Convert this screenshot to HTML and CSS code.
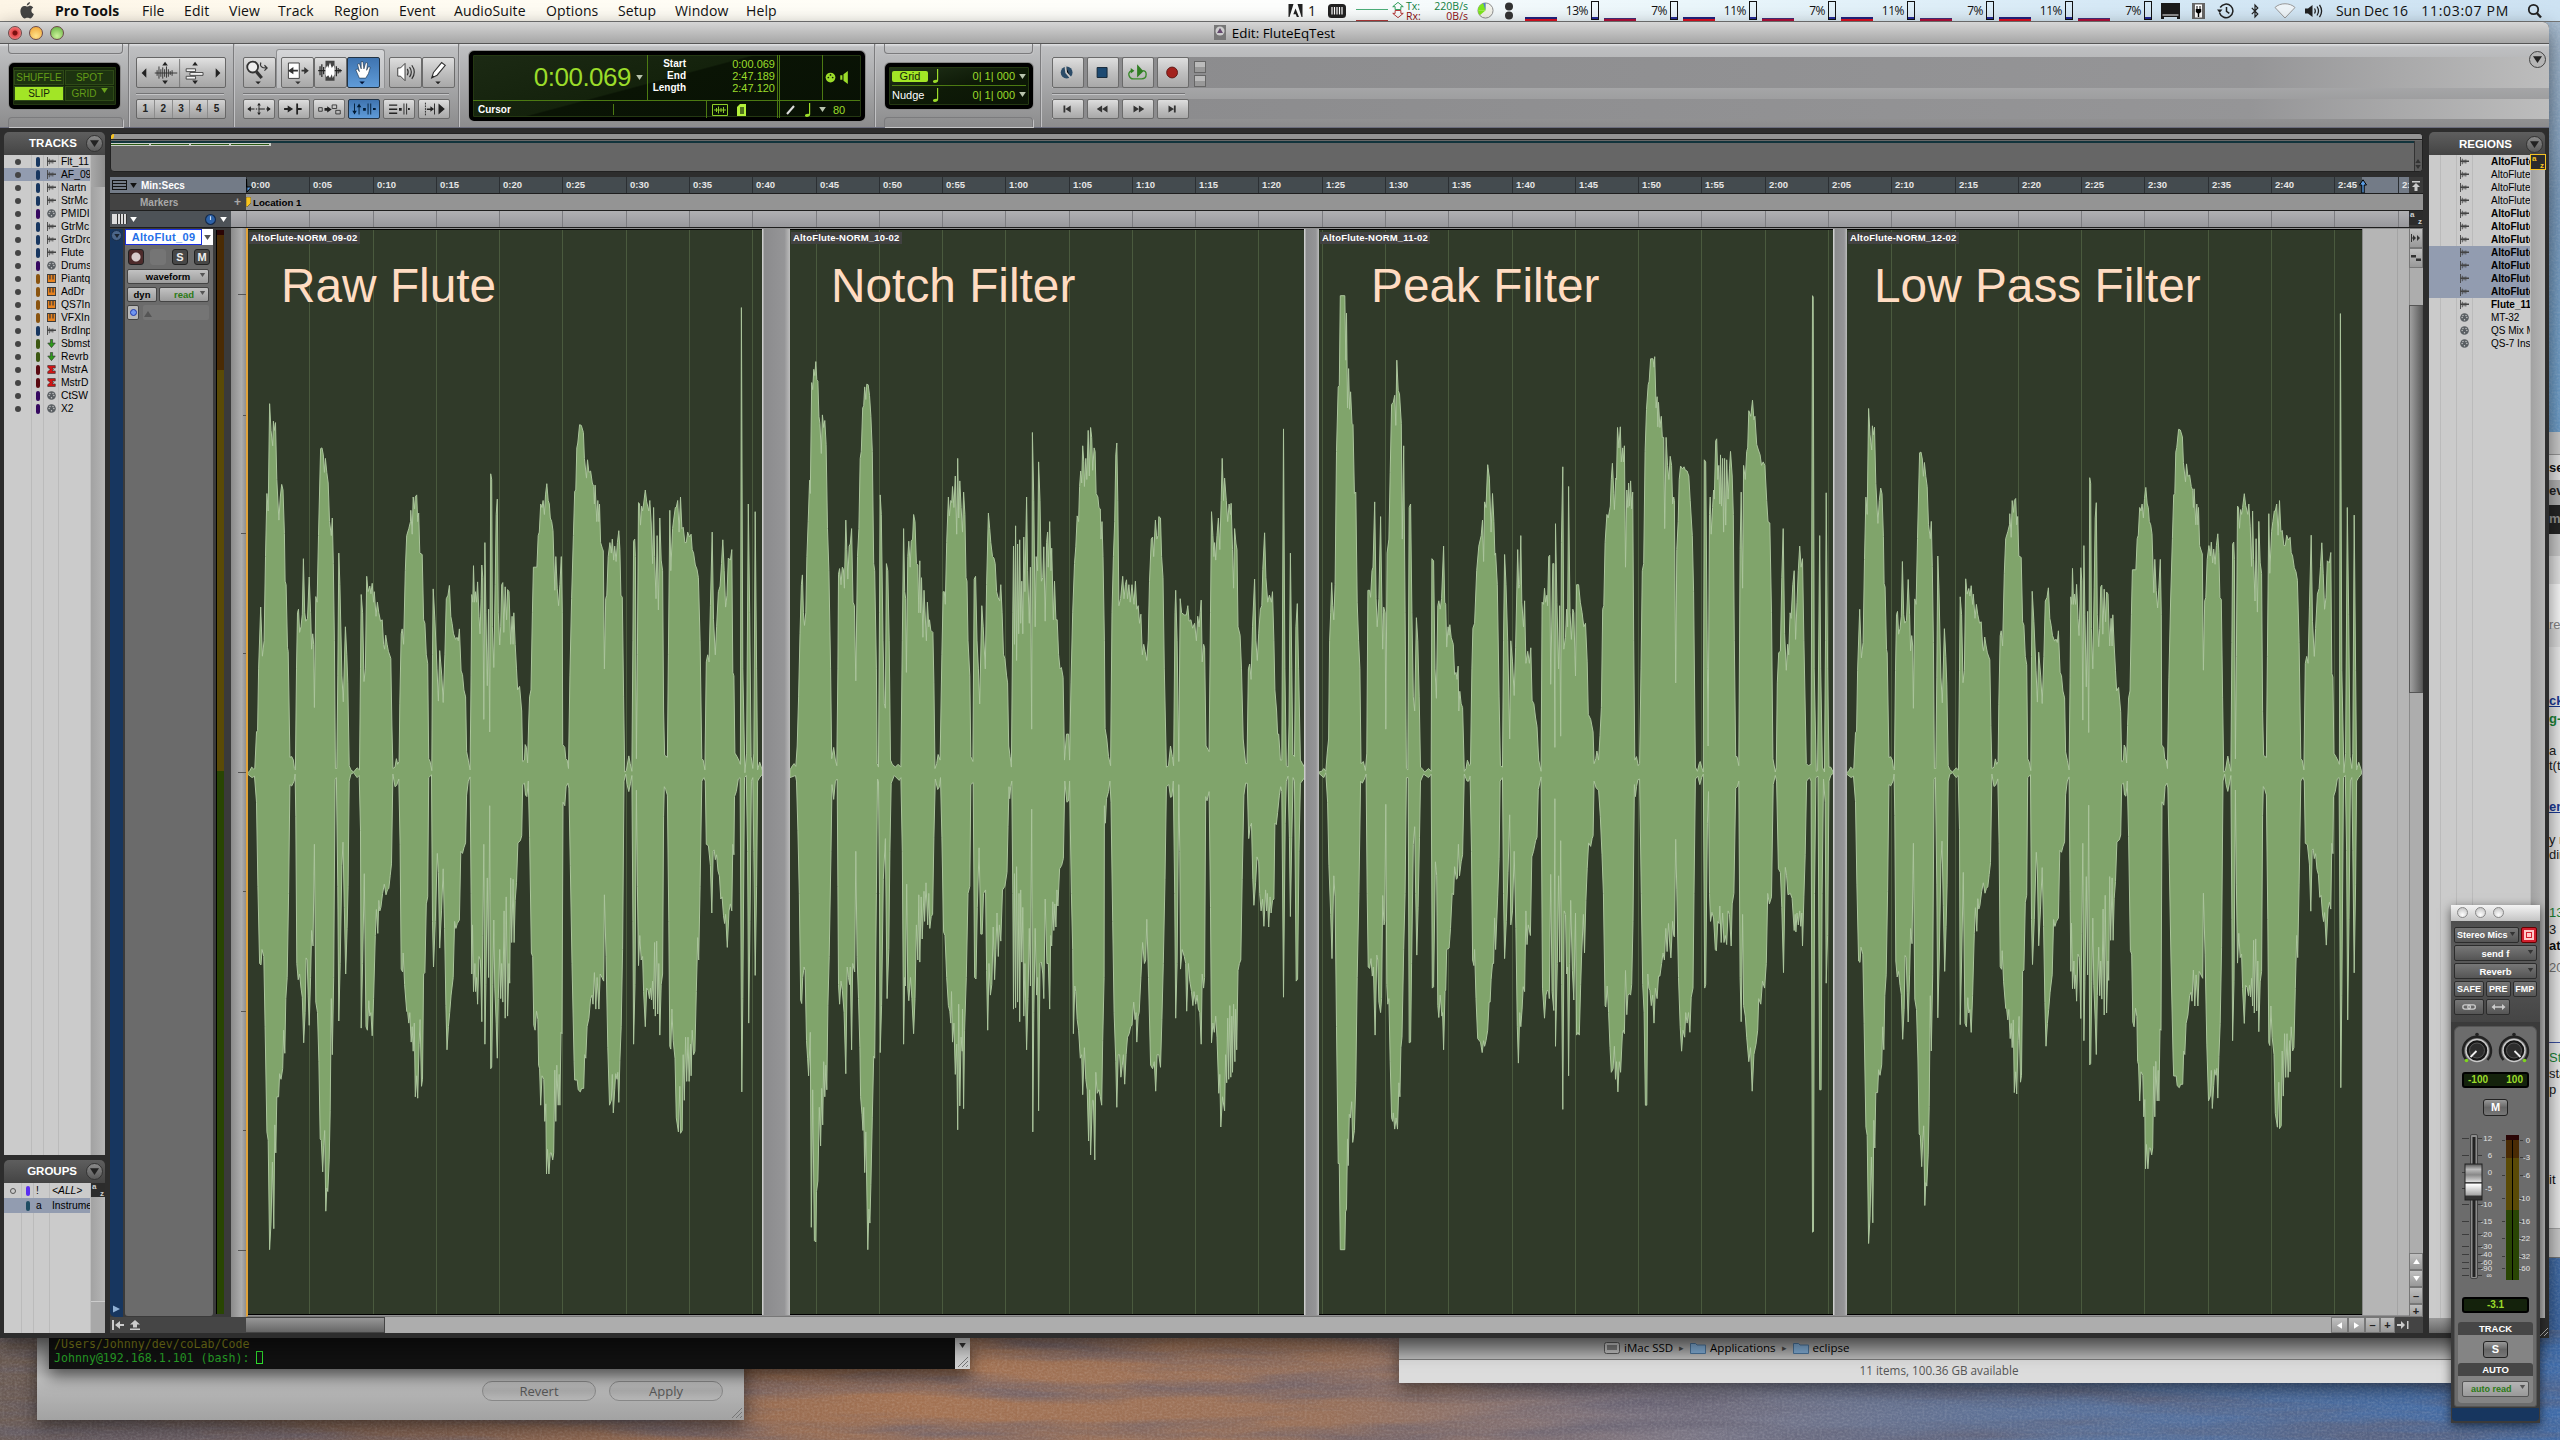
FILE: index.html
```html
<!DOCTYPE html>
<html lang="en">
<head>
<meta charset="utf-8">
<title>Edit: FluteEqTest</title>
<link rel="stylesheet" href="styles.css">
</head>
<body>
<svg class="defs" width="0" height="0" aria-hidden="true">
  <symbol id="i-wave" viewBox="0 0 10 10"><path d="M0 0h1v10H0zM2 2h1v6H2zM4 3h1v4H4zM1 4h9v1.6H1zM6 2.8h1v4.4H6z"/></symbol>
  <symbol id="i-midi" viewBox="0 0 10 10"><circle cx="5" cy="5" r="4.8" fill="#5a5f63"/><g fill="#c9c9c9"><circle cx="2.4" cy="5" r=".8"/><circle cx="3.3" cy="2.8" r=".8"/><circle cx="6.7" cy="2.8" r=".8"/><circle cx="7.6" cy="5" r=".8"/><circle cx="5" cy="7.4" r=".8"/></g></symbol>
  <symbol id="i-inst" viewBox="0 0 10 10"><path fill="#3a3a3a" d="M0 0h10v10H0z"/><path fill="#e8821e" d="M1 1h1.6v5H4V1h2v5h1.4V1H9v8H1z"/></symbol>
  <symbol id="i-aux" viewBox="0 0 10 10"><path fill="#2f9a1c" stroke="#333" stroke-width=".7" d="M3.8.5h2.4v4h3L5 9.6.8 4.500h3z"/></symbol>
  <symbol id="i-mstr" viewBox="0 0 10 10"><path fill="#d41414" stroke="#333" stroke-width=".7" d="M.8.6h8.400v2.800H5.600L7.200 5 5.600 6.600h3.600v2.800H.8V7.600L3.400 5 .8 2.400z"/></symbol>
  <symbol id="i-down" viewBox="0 0 8 6"><path d="M0 0h8L4 6z"/></symbol>
  <symbol id="i-up" viewBox="0 0 8 6"><path d="M0 6h8L4 0z"/></symbol>
  <symbol id="i-left" viewBox="0 0 6 8"><path d="M6 0v8L0 4z"/></symbol>
  <symbol id="i-right" viewBox="0 0 6 8"><path d="M0 0v8l6-4z"/></symbol>
  <symbol id="i-note" viewBox="0 0 8 14"><path d="M5 0h1.200v11.200C6.200 13 4.500 14 2.800 14 1.500 14 1 13.300 1 12.600 1 11.400 2.600 10.600 5 10.900z"/></symbol>
</svg>

<div class="desktop">
  <svg class="wallpaper" width="2560" height="1440">
    <filter id="grain" x="0" y="0" width="100%" height="100%">
      <feTurbulence type="fractalNoise" baseFrequency="0.004 0.045" numOctaves="5" seed="7"/>
      <feColorMatrix values="0 0 0 0 0.12  0 0 0 0 0.11  0 0 0 0 0.16  2.600 0 0 0 -1"/>
    </filter>
    <filter id="grain2" x="0" y="0" width="100%" height="100%">
      <feTurbulence type="fractalNoise" baseFrequency="0.4 0.5" numOctaves="2" seed="3"/>
      <feColorMatrix values="0 0 0 0 1  0 0 0 0 1  0 0 0 0 1  0 1.400 0 0 -.5"/>
    </filter>
    <linearGradient id="wp"><stop offset="0" stop-color="#6c5b50"/><stop offset=".16" stop-color="#7f5f4f"/><stop offset=".36" stop-color="#a37252"/><stop offset=".52" stop-color="#987059"/><stop offset=".64" stop-color="#7e7580"/><stop offset=".78" stop-color="#5d7196"/><stop offset="1" stop-color="#3f6ba8"/></linearGradient>
    <linearGradient id="wpr" x2="0" y2="1"><stop offset="0" stop-color="#a9bccf"/><stop offset=".15" stop-color="#7b9dc0"/><stop offset=".3" stop-color="#6fa0cc"/><stop offset=".8" stop-color="#4676ae"/><stop offset="1" stop-color="#3c66a3"/></linearGradient>
    <rect width="2560" height="1440" fill="url(#wp)"/>
    <rect x="2540" width="20" height="1330" fill="url(#wpr)"/>
    <rect y="1330" width="2560" height="110" filter="url(#grain)" opacity=".6"/>
    <rect y="1330" width="2560" height="110" filter="url(#grain2)" opacity=".2"/>
    <rect x="2540" width="20" height="1330" filter="url(#grain2)" opacity=".2"/>
  </svg>

  <section class="win browser">
    <div class="browser-text" id="browserText"></div>
  </section>

  <section class="win prefs">
    <button class="pill">Revert</button>
    <button class="pill">Apply</button>
    <svg class="grip" viewBox="0 0 12 12"><path d="M11 1 1 11M11 5 5 11M11 9l-2 2"/></svg>
  </section>

  <section class="win terminal">
    <div class="term-text"><p class="term-path">/Users/Johnny/dev/coLab/Code</p><p>Johnny@192.168.1.101 (bash): <i class="caret"></i></p></div>
    <div class="term-bar"><svg><use href="#i-down"/></svg><svg class="tgrip" viewBox="0 0 12 12"><path d="M11 1 1 11M11 5 5 11M11 9l-2 2"/></svg></div>
  </section>

  <section class="win finder">
    <div class="path-bar">
      <span class="crumb"><svg viewBox="0 0 16 12"><rect x=".5" y=".5" width="15" height="11" rx="2" fill="#bbb" stroke="#555"/><path d="M3 3h10v5H3z" fill="#777"/></svg>iMac SSD</span>
      <b>▸</b>
      <span class="crumb"><svg viewBox="0 0 16 12"><path d="M.5 1.500h5l1.500 1.500h8.500v8.500H.5z" fill="#7fa9d0" stroke="#4a7298"/></svg>Applications</span>
      <b>▸</b>
      <span class="crumb"><svg viewBox="0 0 16 12"><path d="M.5 1.500h5l1.500 1.500h8.500v8.500H.5z" fill="#7fa9d0" stroke="#4a7298"/></svg>eclipse</span>
    </div>
    <div class="status">11 items, 100.36 GB available</div>
  </section>

  <header class="menubar">
    <svg class="apple" viewBox="0 0 16 18"><path fill="#444" d="M11.200 0c.1 1.900-1.500 3.600-3.400 3.600C7.600 1.900 9.300.2 11.200 0zM8.200 4.800c.9 0 1.800-.8 3.100-.8 1 0 2.400.5 3.300 1.800-2.900 1.700-2.400 5.800.7 6.900-.8 2.200-2.300 4.800-3.900 4.800-1.100 0-1.500-.7-2.900-.7s-1.800.7-2.900.7C3.400 17.500 1 13.300 1 9.600 1 6.100 3.200 4.200 5.300 4.200c1.300 0 2.200.6 2.900.6z"/></svg>
    <nav class="menus">
      <b>Pro Tools</b><span>File</span><span>Edit</span><span>View</span><span>Track</span><span>Region</span><span>Event</span><span>AudioSuite</span><span>Options</span><span>Setup</span><span>Window</span><span>Help</span>
    </nav>
    <div class="adobe"><svg viewBox="0 0 14 13"><path fill="#222" d="M0 0h5L1 13H0zM9 0h5v13h-1zM7 4.500 10.500 13H8.300L7.300 10.300H4.800z"/></svg>1</div>
    <svg class="mem" viewBox="0 0 18 14"><rect width="18" height="14" rx="3.500" fill="#222"/><path stroke="#fff" stroke-width="1.200" d="M4 3v7.500M6.500 3v7.500M9 3v7.500M11.500 3v7.500M14 3v7.500"/></svg>
    <svg class="netgraph" viewBox="0 0 32 22"><path stroke="#4caf7a" d="M0 9.500h32"/><path stroke="#b33a3a" d="M0 20.500h32"/></svg>
    <svg class="netarrows" viewBox="0 0 14 22"><path fill="none" stroke="#2a9a55" d="M7 2.500 12.500 7H10v3H4V7H1.500z"/><path fill="none" stroke="#b03030" d="M7 18.500 12.500 14H10v-3H4v3H1.500z"/></svg>
    <div class="net"><p class="sent"><span>Tx:</span><span>220B/s</span></p><p class="recv"><span>Rx:</span><span>0B/s</span></p></div>
    <svg class="pie" viewBox="0 0 18 18"><circle cx="9" cy="9" r="8" fill="#f2f2ea" stroke="#888"/><path fill="#7ee81c" d="M9 9 9 1A8 8 0 0 0 1 9z"/><path fill="#7ee81c" d="M9 9H1a8 8 0 0 0 2 5z"/><path fill="#5b7bd8" d="M9 9V1H6.500z"/></svg>
    <svg class="dots" viewBox="0 0 8 18"><circle cx="4" cy="4.500" r="4" fill="#333"/><circle cx="4" cy="13.500" r="4" fill="#333"/></svg>
    <div class="cpus" id="cpus"></div>
    <svg class="mi display" viewBox="0 0 19 16"><path fill="#1a1a1a" d="M0 0h19v16h-3v-2H3v2H0z"/><path fill="#fff" d="M1.500 11.500h16v1h-16z"/></svg>
    <svg class="mi plug" viewBox="0 0 13 16"><rect width="13" height="16" fill="#666"/><rect x="3" y="1.500" width="7" height="13" fill="#fff"/><path d="M4.500 3v3h-.7v3l2 1.500V14h1.400v-3.500l2-1.500V6h-.7V3h-1v3h-2V3z"/></svg>
    <svg class="mi machine" viewBox="0 0 17 16"><path fill="none" stroke="#222" stroke-width="1.500" d="M3.200 4.500A6.800 6.800 0 1 1 2.600 10M9.500 4v4.300l2.800 2"/><path fill="#222" d="M0 6.500h5.500L2.600 10z"/></svg>
    <svg class="mi tooth" viewBox="0 0 8 14"><path fill="none" stroke="#222" stroke-width="1.200" d="M.8 3.800 6.800 10 4 13V1l2.800 3L.8 10.200"/></svg>
    <svg class="mi wifi" viewBox="0 0 22 16"><path fill="#eef4f8" stroke="#999" d="M11 15 1 4.500C6-.5 16-.5 21 4.500z"/></svg>
    <svg class="mi sound" viewBox="0 0 18 14"><path fill="#222" d="M0 4.500h3L7.500 1v12L3 9.500H0z"/><path fill="none" stroke="#222" stroke-width="1.300" d="M9.500 4.500q1.600 2.500 0 5M12 2.500q3 4.500 0 9M14.500.8q4.200 6.200 0 12.400"/></svg>
    <div class="clock"><span>Sun Dec 16</span><span class="time">11:03:07 PM</span></div>
    <svg class="mi find" viewBox="0 0 15 15"><circle cx="6.500" cy="6" r="4.700" fill="none" stroke="#222" stroke-width="1.800"/><path stroke="#222" stroke-width="2.400" d="M9.800 9.500 14 14"/></svg>
  </header>

  <main class="edit">
    <div class="titlebar">
      <div class="lights"><i class="red"></i><i class="amber"></i><i class="green"></i></div>
      <h1><svg viewBox="0 0 12 15"><path fill="#777" d="M0 0h12v15H0z"/><circle cx="6" cy="6" r="4.500" fill="#ccc"/><path fill="#654a6e" d="M6 3 9 8H3z"/></svg>Edit: FluteEqTest</h1>
    </div>

    <div class="toolbar">
      <div class="tg mode">
        <div class="stub top"></div>
        <div class="lcd modes"><span>SHUFFLE</span><span>SPOT</span><span class="on">SLIP</span><span>GRID<svg><use href="#i-down"/></svg></span></div>
        <div class="stub bot"></div>
      </div>
      <div class="tg zoom">
        <div class="btnbox">
          <svg viewBox="0 0 90 32">
            <path d="M43.500 1v30" stroke="#777"/>
            <path fill="#222" d="M8 11v10l-5-5zM82 11v10l5-5zM28 4l3 4h-6zM28 28l3-4h-6zM60 4l3 4h-6zM60 28l3-4h-6z"/>
            <path fill="none" stroke="#333" d="M17 16h24M19.500 13v6M21.500 9v13M23.500 12v8M25.500 10v12M27.500 12v8M29.500 9v12M31.500 12v8M33.500 14v4M35.500 13v6"/>
            <path fill="#f5f5f5" stroke="#444" d="M50.500 11.500h10v3h-10zM54.500 15.500h14v3h-14zM50.500 19.500h10v3h-10z"/>
          </svg>
        </div>
        <hr>
        <div class="presets"><span>1</span><span>2</span><span>3</span><span>4</span><span>5</span></div>
      </div>
      <div class="tg tools">
        <div class="toolrow">
          <span class="tb"><svg viewBox="0 0 32 32"><circle cx="9" cy="10" r="6" fill="#eee" stroke="#333" stroke-width="2"/><path stroke="#333" stroke-width="3.500" d="m13 15 6 7"/><path fill="none" stroke="#333" stroke-width="1.300" d="M18 5q-2 6 6 6M22 8l3 3-3 3"/><path fill="#222" d="M12 26h6l-3 3z"/></svg></span>
          <div class="smart">
            <span class="tb"><svg viewBox="0 0 32 32"><path fill="#fff" stroke="#333" d="M6.500 5.500h12v17h-12z"/><path fill="#333" d="M6 14l6-4v3h5v2h-5v3zM29 14l-5-4v3h-3v2h3v3zM14 26h6l-3 3z"/></svg></span>
            <span class="tb"><svg viewBox="0 0 32 32"><path fill="#444" d="M11 3h10v22H11z"/><path fill="none" stroke="#222" stroke-width="1.300" d="M3 14h26M5 9v10M7 7v14M9 10v8M23 9v11M25 11v6M27 12v4"/><path fill="#fff" d="m11 12 2-4 1 3 2-6 2 6 2-3 1 4v6l-2 4-1-4-2 4-2-3-2 2-1-3z"/></svg></span>
            <span class="tb blue"><svg viewBox="0 0 32 32"><path fill="#fff" stroke="#123" stroke-width=".6" d="m8 13 2-1 2 3-2-8 2-1 2 6 0-8h2l1 8 2-7 2 .6-1 8 2-4 2 .6-2 7-3 5h-7z"/><path fill="#013" d="M12 26h6l-3 3z"/></svg></span>
          </div>
          <span class="tb"><svg viewBox="0 0 32 32"><path fill="#fff" stroke="#333" d="M8 11h3l5-5v19l-5-5H8z"/><path fill="none" stroke="#333" stroke-width="1.300" d="M18.500 12q2 3.500 0 7M21 10q4 5.500 0 11M23.500 8q5.500 7.500 0 15"/></svg></span>
          <span class="tb"><svg viewBox="0 0 32 32"><path fill="#fff" stroke="#333" stroke-width="1.200" d="M9 22l2-6L20 5l4 3-9 11z"/><path fill="#222" d="M9 22l1-3 2 1.500zM13 26h6l-3 3z"/></svg></span>
        </div>
        <hr>
        <div class="toolrow low">
          <span class="tb"><svg viewBox="0 0 32 20"><path fill="none" stroke="#222" stroke-width="1.200" stroke-dasharray="7 1.500 1.500 1.500" d="M4 10h24"/><path fill="#222" d="M3 10l4-3v6zM29 10l-4-3v6zM16 3l2 3h-4zM16 17l2-3h-4z"/><path stroke="#222" d="M16 6v8"/></svg></span>
          <span class="tb"><svg viewBox="0 0 32 20"><path fill="#222" d="M5 9h4V6l6 4-6 4v-3H5zM18.500 4h2v5h4v2h-4v5h-2z"/></svg></span>
          <span class="tb"><svg viewBox="0 0 32 20"><path fill="none" stroke="#333" d="M4.500 8.500h4v4h-4zM19.500 5.500h5v4h-5zM23.500 11.500h5v4h-5z"/><path fill="#222" d="M11 9h3V7l5 3.500-5 3.500v-2h-3z"/></svg></span>
          <span class="tb blue"><svg viewBox="0 0 32 20"><path fill="#001a33" d="M5 4h1v8h2l-2.500 4L3 12h2zM11 16h-1V8H8l2.500-4L13 8h-2zM15 9h3v3h-3zM20 4h1v12h-1zM23 4h1v12h-1zM26 9h3v2h-3z"/></svg></span>
          <span class="tb"><svg viewBox="0 0 32 20"><path fill="#222" d="M5 5h9v1.500H5zM5 9.500h9V11H5zM5 14h9v1.500H5zM16 9h3v3h-3zM21 4h1v12h-1zM24 4h1v12h-1zM26 9h2v2h-2z"/></svg></span>
          <span class="tb"><svg viewBox="0 0 32 20"><path stroke="#222" stroke-dasharray="2 1" d="M6.500 3v14"/><path fill="#222" d="M8 9.500h4V7l4 3-4 3v-2H8zM16 4h1v12h-1zM21 4l7 6-7 6z"/></svg></span>
        </div>
      </div>
      <div class="tg counter">
        <div class="lcd big">
          <div class="c-main"><strong>0:00.069</strong><svg class="dd"><use href="#i-down"/></svg></div>
          <div class="c-sel"><b>Start</b><span>0:00.069</span><b>End</b><span>2:47.189</span><b>Length</b><span>2:47.120</span></div>
          <div class="c-midi"><svg viewBox="0 0 22 12"><circle cx="5" cy="6" r="4.500" fill="#9bdc2a"/><g fill="#132407"><circle cx="3" cy="6" r=".8"/><circle cx="5" cy="3.600" r=".8"/><circle cx="7" cy="6" r=".8"/></g><path fill="#9bdc2a" d="M14 4h2v4h-2zM17 3l4-3v12l-4-3z"/></svg></div>
          <div class="c-cur"><b>Cursor</b><i></i></div>
          <div class="c-ico"><svg viewBox="0 0 36 12"><path fill="none" stroke="#8ccc28" d="M.5.500h15v11H.5zM2 6h12M4.500 4v4M6.500 2.500v7M9 4v4M11.500 3v6"/><path fill="#b3f03a" d="M28 0h6v12h-9V3z"/><path fill="#10200a" d="M28 3h4v7h-4z" opacity=".6"/></svg></div>
          <div class="c-nudge"><svg viewBox="0 0 12 12"><path stroke="#ddd" stroke-width="2" d="M2 10 9 2"/></svg><svg class="note"><use href="#i-note"/></svg><svg class="dd"><use href="#i-down"/></svg><span>80</span></div>
        </div>
      </div>
      <div class="tg gridnudge">
        <div class="stub top"></div>
        <div class="lcd gn">
          <p><em>Grid</em><svg class="note"><use href="#i-note"/></svg><span>0| 1| 000</span><svg class="dd"><use href="#i-down"/></svg></p>
          <p><b>Nudge</b><svg class="note"><use href="#i-note"/></svg><span>0| 1| 000</span><svg class="dd"><use href="#i-down"/></svg></p>
        </div>
        <div class="stub bot"></div>
      </div>
      <div class="tg transport">
        <div class="toolrow gap">
          <span class="tb"><svg viewBox="0 0 32 32"><circle cx="14.500" cy="16" r="6.500" fill="#2c4c68"/><path stroke="#c8c8c8" stroke-width="2" d="M13 8l1 8 5 6"/></svg></span>
          <span class="tb"><svg viewBox="0 0 32 32"><path fill="#1d4a72" stroke="#123" d="M9.500 10.500h11v11h-11z"/></svg></span>
          <span class="tb"><svg viewBox="0 0 32 32"><path fill="none" stroke="#3b8a2c" stroke-width="1.500" d="M9 14q-4 2-3 5 1 4 5 4h9q5 0 5-5 0-4-4-4"/><path fill="#2f7d22" d="M15 7l7 7.500-7 7z"/><path fill="#2f7d22" d="M8 11l4 3-4 3z"/></svg></span>
          <span class="tb"><svg viewBox="0 0 32 32"><circle cx="15" cy="16" r="6" fill="#a3221d" stroke="#5d1512"/></svg></span>
          <div class="minis"><i></i><i></i></div>
        </div>
        <hr>
        <div class="toolrow low gap">
          <span class="tb"><svg viewBox="0 0 32 20"><path fill="#333" d="M11 6h2v8h-2zM19 6v8l-6-4z"/></svg></span>
          <span class="tb"><svg viewBox="0 0 32 20"><path fill="#333" d="M15 6v8l-6-4zM21 6v8l-6-4z"/></svg></span>
          <span class="tb"><svg viewBox="0 0 32 20"><path fill="#333" d="M11 6v8l6-4zM17 6v8l6-4z"/></svg></span>
          <span class="tb"><svg viewBox="0 0 32 20"><path fill="#333" d="M11 6v8l6-4zM17 6h2v8h-2z"/></svg></span>
        </div>
      </div>
      <span class="round light"><svg><use href="#i-down"/></svg></span>
    </div>

    <div class="work">
      <aside class="side">
        <div class="panel tracks">
          <h2>TRACKS<span class="round"><svg><use href="#i-down"/></svg></span></h2>
          <div class="list"><ul id="trackList"></ul><div class="sb"><i></i></div></div>
        </div>
        <div class="panel groups">
          <h2>GROUPS<span class="round"><svg><use href="#i-down"/></svg></span></h2>
          <div class="list">
            <ul>
              <li><span class="ring"></span><i class="sw" style="background:#5a2df0"></i><span class="gid">!</span><em>&lt;ALL&gt;</em></li>
              <li class="sel"><span></span><i class="sw" style="background:#1f4c63"></i><span class="gid">a</span><span>Instrume</span></li>
            </ul>
            <div class="sb"><span class="az"><b>a</b><b>z</b></span><i></i></div>
          </div>
        </div>
      </aside>

      <section class="center">
        <div class="universe"><i class="strip"></i><i class="flag"></i><i class="teal"></i><i class="clips"></i><i class="usb"><svg><use href="#i-up"/></svg><svg><use href="#i-down"/></svg></i></div>
        <div class="ruler r1">
          <div class="rl"><svg class="bars" viewBox="0 0 15 10"><path fill="#111" d="M0 0h15v10H0z"/><path fill="#737b87" d="M1 1h13v2H1zM1 4h13v2H1zM1 7h13v2H1z"/></svg><svg class="tri"><use href="#i-down"/></svg><b>Min:Secs</b></div>
          <div class="scale" id="scale"></div>
          <div class="rend"><svg viewBox="0 0 14 16"><path fill="#ccc" d="M3 4h8v1.500H3zM7 6l4 4H8.500v4h-3v-4H3z"/></svg></div>
        </div>
        <div class="ruler r2">
          <div class="rl"><b>Markers</b><span class="plus">+</span></div>
          <div class="scale"><svg class="mark" viewBox="0 0 5 10"><path fill="#f9c41c" stroke="#333" stroke-width=".5" d="M0 0h5v6L1 10H0z"/></svg><b>Location 1</b></div>
          <div class="rend"></div>
        </div>
        <div class="ruler r3">
          <div class="rl"><svg class="bars" viewBox="0 0 15 10"><path fill="#ddd" d="M0 0h15v10H0z"/><path fill="#333" d="M5 0h1v10H5zM8 0h1v10H8zM11 0h1v10h-1zM14 0h1v10h-1z"/></svg><svg class="tri w"><use href="#i-down"/></svg><svg class="clk" viewBox="0 0 10 10"><circle cx="5" cy="5" r="4.500" fill="#2d62a8" stroke="#14294a"/><path stroke="#cde" d="M5 2v3.500"/></svg><svg class="tri w"><use href="#i-down"/></svg></div>
          <div class="scale" id="gridScale"></div>
          <div class="rend"><span class="az"><b>a</b><b>z</b></span></div>
        </div>

        <div class="track">
          <div class="stripe"><span class="round navy"><svg><use href="#i-down"/></svg></span><svg class="play" viewBox="0 0 8 8"><path fill="#8fb0d4" d="M0 0l8 4-8 4z"/></svg></div>
          <div class="ctl">
            <div class="name"><b>AltoFlut_09</b><span><svg><use href="#i-down"/></svg></span></div>
            <div class="sq"><i class="rec"></i><i class="blank"></i><i>S</i><i>M</i></div>
            <div class="pick"><b>waveform</b><svg><use href="#i-down"/></svg></div>
            <div class="two"><div class="pick"><b>dyn</b></div><div class="pick grn"><b>read</b><svg><use href="#i-down"/></svg></div></div>
            <div class="two"><div class="pick tiny"><i></i></div><div class="slot"><svg><use href="#i-up"/></svg></div></div>
          </div>
          <div class="meter"><i></i></div>
          <svg class="amp" width="15" height="1089"><path stroke="#555" d="M7 66.500h8M12 187.500h3M10 305.500h5M12 425.500h3M7 544.500h8M12 663.500h3M10 783.500h5M12 902.500h3M7 1022.500h8"/></svg>
          <div class="lane" id="lane"></div>
          <div class="vsb">
            <span class="cell"><svg class="wide" viewBox="0 0 10 8"><path fill="#333" d="M0 0h1v8H0zM1 3.500h3v1H1zM2 1l3 3-3 3zM6 1l3 3-3 3z"/></svg></span>
            <span class="cell"><svg class="wide" viewBox="0 0 10 8"><path fill="#333" d="M0 1h5v2.500H0zM5 4.500h5V7H5z"/></svg></span>
            <i class="vtrack a"></i><i class="vthumb"></i><i class="vtrack b"></i>
            <span class="cell s"><svg><use href="#i-up"/></svg></span><span class="cell s"><svg><use href="#i-down"/></svg></span><span class="cell s">–</span><span class="cell s last">+</span>
          </div>
        </div>
        <div class="hsb">
          <div class="hl"><svg viewBox="0 0 30 12"><path fill="#ccc" d="M0 1h2v10H0zM3 6l5-4v3h4v2H8v3zM23 1l5 4.500h-3v3h-4v-3h-3zM18 9.500h10V11H18z"/></svg></div>
          <i class="hthumb"></i><i class="htrack"></i>
          <span class="cell"><svg class="h"><use href="#i-left"/></svg></span><span class="cell"><svg class="h"><use href="#i-right"/></svg></span><span class="cell n">–</span><span class="cell n">+</span><span class="cell d"><svg viewBox="0 0 12 8"><path fill="#ccc" d="M0 3h4V0l4 4-4 4V5H0zM10 0h1.500v8H10z"/></svg></span>
        </div>
      </section>

      <aside class="panel regions">
        <h2>REGIONS<span class="round"><svg><use href="#i-down"/></svg></span></h2>
        <div class="list"><ul id="regionList"></ul><div class="sb"><span class="az y"><b>a</b><b>z</b></span></div></div>
        <i class="rsb"></i>
      </aside>
    </div>
    <svg class="wgrip" viewBox="0 0 10 10"><path d="M9 1 1 9M9 5 5 9"/></svg>
  </main>

  <section class="send">
    <div class="sbar"><i></i><i></i><i></i></div>
    <div class="shead">
      <div class="srow"><span class="sel2">Stereo Mics<svg><use href="#i-down"/></svg></span><span class="target"><i></i></span></div>
      <div class="srow"><span class="sel2">send f<svg><use href="#i-down"/></svg></span></div>
      <div class="srow"><span class="sel2">Reverb<svg><use href="#i-down"/></svg></span></div>
      <div class="srow"><span class="sb2 w30">SAFE</span><span class="sb2">PRE</span><span class="sb2">FMP</span></div>
      <div class="srow"><span class="sb2 w30"><svg viewBox="0 0 18 8"><g fill="none" stroke="#ccc" stroke-width="1.600"><rect x="1" y="1.500" width="9" height="5" rx="2.500"/><rect x="7" y="1.500" width="9" height="5" rx="2.500"/></g></svg></span><span class="sb2"><svg viewBox="0 0 14 8"><path fill="#ccc" d="M0 4l3.500-3v2.300h7V1L14 4l-3.500 3V4.700h-7V7z"/></svg></span></div>
    </div>
    <div class="sbody">
      <svg class="knobs" viewBox="0 0 83 38">
        <radialGradient id="kn"><stop offset="0" stop-color="#2a2a2a"/><stop offset="1" stop-color="#111"/></radialGradient>
        <g fill="none" stroke="#222" stroke-width="2.500"><path d="M12.500 32a14 14 0 1 1 21 0"/><path d="M49.500 32a14 14 0 1 1 21 0"/></g>
        <circle cx="23" cy="22.500" r="11" fill="url(#kn)" stroke="#c9c9c9" stroke-width="1.500"/><circle cx="60" cy="22.500" r="11" fill="url(#kn)" stroke="#c9c9c9" stroke-width="1.500"/>
        <circle cx="23" cy="22.500" r="7.500" fill="#2c2c2c" stroke="#555"/><circle cx="60" cy="22.500" r="7.500" fill="#2c2c2c" stroke="#555"/>
        <path stroke="#eee" stroke-width="1.800" d="m16.500 29 6-6M66.500 29l-6-6"/>
        <circle cx="12.500" cy="32.500" r="1.800" fill="#7fd51e"/><circle cx="70.500" cy="32.500" r="1.800" fill="#7fd51e"/>
        <circle cx="23" cy="6.500" r="1.800" fill="#222"/><circle cx="60" cy="6.500" r="1.800" fill="#222"/>
      </svg>
      <div class="slcd pair"><span>-100</span><span>100</span></div>
      <span class="sm">M</span>
      <svg class="fader" id="fader" width="83" height="152"></svg>
      <div class="slcd">-3.1</div>
      <div class="sub"><h3>TRACK</h3><div><span class="sm">S</span></div><h3>AUTO</h3><div><span class="auto">auto read<svg><use href="#i-down"/></svg></span></div></div>
    </div>
    <div class="sfoot"></div>
  </section>
</div>
<script src="script.js"></script>
</body>
</html>
```
FILE: styles.css
```css
*{box-sizing:border-box}
body{margin:0;background:#6b5b50;font-family:"Liberation Sans",Arial,sans-serif;font-size:11px;color:#000}
h1,h2,h3,p,ul{margin:0;padding:0;font-weight:normal}
ul{list-style:none}
svg{display:block;flex:none}
button{font:inherit}
.defs{position:absolute}
.desktop{position:relative;width:2560px;height:1440px;overflow:hidden}
.wallpaper{position:absolute;left:0;top:0}
.win{position:absolute;overflow:hidden}

/* menu bar */
.menubar{position:absolute;left:0;top:0;width:2560px;height:22px;display:flex;align-items:center;background:linear-gradient(90deg,#fdf5e6 0,#fffbf0 12%,#fffef8 35%,#fdfefd 50%,#eaf6fb 66%,#d6e9f6 82%,#cde2f2 100%);border-bottom:1px solid #777;font:14px "Open Sans","Noto Sans",sans-serif;color:#111}
.apple{width:16px;height:17px;margin-left:19px}
.menus{display:grid;grid-template-columns:87px 42px 45px 49px 56px 65px 55px 92px 72px 57px 71px 50px;margin-left:20px;width:741px;white-space:nowrap}
.menus span,.menus b{line-height:21px}
.menus span{letter-spacing:.1px}
.adobe{display:flex;align-items:center;gap:5px;width:40px;margin-left:492px}
.adobe svg{width:15px;height:13px}
.mem{width:18px;height:14px}
.netgraph{width:32px;height:22px;margin-left:10px}
.netarrows{width:14px;height:21px;margin-left:3px}
.net{width:62px;font-size:10.5px;margin-left:1px}
.net p{display:flex;justify-content:space-between;line-height:10px}
.sent{color:#12803f}.recv{color:#8f1010}
.pie{width:17px;height:17px;margin-left:9px}
.dots{width:8px;height:18px;margin-left:11px}
.cpus{display:flex;margin-left:12px;height:21px}
.cpu{width:79px;height:21px;display:flex;align-items:flex-end}
.cpu i{width:32px;height:4px;background:linear-gradient(#23237f 50%,#e01020 50%)}
.cpu.lo i{height:3px;background:linear-gradient(#44307a 50%,#b3103a 50%)}
.cpu span{width:31px;text-align:right;font-size:12px;line-height:20px;letter-spacing:-.5px}
.cpu b{width:8px;height:19px;border:1px solid #111;margin:0 0 1px 3px;background:linear-gradient(#fff0 86%,#222a99 86%)}
.mi{height:16px;flex:none}
.display{width:19px;margin-left:4px}
.plug{width:13px;margin-left:12px}
.machine{width:17px;margin-left:12px}
.tooth{width:8px;margin-left:17px}
.wifi{width:22px;margin-left:15px}
.sound{width:18px;margin-left:9px}
.find{width:15px;margin-left:18px}
.clock{display:flex;gap:9px;margin-left:13px;width:173px;white-space:nowrap;justify-content:space-between;letter-spacing:-.1px}
.clock .time{letter-spacing:.7px}

/* edit window */
.edit{position:absolute;left:0;top:22px;width:2549px;height:1316px;background:#2d2d2d;border-radius:0 6px 0 0;box-shadow:0 8px 22px rgba(0,0,0,.55);overflow:hidden}
.titlebar{height:22px;background:linear-gradient(#d6d6d6,#a6a6a6);border-bottom:1px solid #555;position:relative;display:flex;justify-content:center;align-items:center}
.titlebar h1{display:flex;gap:6px;font:13.4px "Open Sans","Noto Sans",sans-serif;align-items:center}
.titlebar h1 svg{width:12px;height:15px}
.lights{position:absolute;left:8px;top:4px;display:flex;gap:7px}
.lights i{width:14px;height:14px;border-radius:50%;border:1px solid #6b4a4a}
.red{background:radial-gradient(circle at 50% 50%,#7a1010 0 2px,#e5484a 3px,#f9a0a0)}
.amber{background:radial-gradient(circle at 50% 75%,#ffe28a,#f0a030)}
.green{background:radial-gradient(circle at 50% 75%,#ccf29a,#5fae3c)}
.toolbar{height:84px;display:flex;background:linear-gradient(#e2e3e5 0,#bfc0c2 3px,#8c8c8d);border-bottom:1px solid #6a6c7c;position:relative}
.tg{border-right:1px solid #7c7c7e;box-shadow:1px 0 #c2c2c4;padding-top:13px;height:83px}
.tg hr{border:0;border-top:1px solid #747476;border-bottom:1px solid #c4c4c6;margin:5px 0 4px;height:2px}
.mode,.gridnudge{padding-top:0;display:flex;flex-direction:column;justify-content:space-between}
.mode{width:129px;padding-left:8px}
.stub{width:115px;height:10px;border:1px solid #7b7b7d;box-shadow:1px 1px #c4c4c6}
.stub.top{border-top:0;border-radius:0 0 4px 4px}
.stub.bot{border-bottom:0;border-radius:4px 4px 0 0}
.lcd{background:#0c1706;border:4px solid #000;border-radius:5px;box-shadow:0 0 0 1px #8b8b8b,inset 0 0 0 1px #243812}
.lcd,.lcd *{color:#9bdc2a}
.modes{width:111px;height:46px;margin-left:1px;padding:3px 1px;display:grid;grid-template-columns:50px 49px;grid-template-rows:15px 15px;gap:1px;background:#16260b}
.modes span{display:flex;align-items:center;justify-content:center;gap:4px;font-size:10px;color:#649c18;background:#1d3310;border:1px solid #2e4a17}
.modes .on{background:#a2e526;color:#14240a}
.modes svg{width:7px;height:5px;fill:#6aa31c;margin-top:-5px}
.zoom{width:105px;padding-left:7px}
.btnbox{width:90px;height:31px;border:1px solid #666;border-radius:2px;background:linear-gradient(#e2e2e2,#bdbdbd 50%,#a6a6a6)}
.btnbox svg{width:88px;height:30px}
.presets{width:90px;height:20px;display:flex;border:1px solid #666;border-radius:2px;background:linear-gradient(#d2d2d2,#9f9f9f)}
.presets span{flex:1;text-align:center;line-height:18px;font-weight:bold;font-size:10px;color:#222;border-left:1px solid #8c8c8c}
.presets span:first-child{border:0}
.tools{width:225px;padding-left:9px}
.tools hr,.zoom hr{margin-right:9px}
.toolrow{display:flex;height:31px;gap:0}
.tb{width:32px;height:31px;border:1px solid #6b6b6b;border-radius:2px;background:linear-gradient(#dedede,#c0c0c0 50%,#a8a8a8)}
.tb svg{width:30px;height:29px}
.tb.blue{background:linear-gradient(#3f74b0,#5f9bd8);border-color:#234}
.smart{display:flex;margin:-8px 4px 0 0;padding:7px 4px 0;border:1px solid #8f9092;border-bottom:0;border-radius:3px 3px 0 0;background:linear-gradient(#d5d6d8,#bbbcbe);height:39px}
.tools .toolrow:not(.low) .tb{width:33px}
.tools .low,.transport .low{height:20px;gap:3px}
.low .tb{height:20px}
.low .tb svg{height:18px}
.counter{width:416px;padding:7px 0 0 10px}
.big{width:396px;height:70px;display:grid;grid-template-columns:174px 133px 80px;grid-template-rows:46px 17px;background:linear-gradient(165deg,#1c2a14 0,#14220c 45%,#0a1405 46%,#081104);position:relative}
.c-main{display:flex;align-items:center;justify-content:flex-end;gap:5px;border-bottom:1px solid #4c7a12;padding-right:4px}
.c-main strong{font-weight:normal;font-size:26px;letter-spacing:-.5px}
.dd{width:7px;height:5px;fill:#b9c4ae}
.note{width:8px;height:14px;fill:#9bdc2a}
.c-sel{display:grid;grid-template-columns:38px auto;grid-auto-rows:12px;padding:3px 2px 0 0;border-left:1px solid #4c7a12;border-right:3px double #4c7a12;border-bottom:1px solid #4c7a12;text-align:right;line-height:12px}
.c-sel b{font-size:10px}
.lcd b{color:#fff}
.c-midi{border-bottom:1px solid #4c7a12;display:flex;align-items:center;padding-left:45px;background:linear-gradient(#4c7a12,#4c7a12) 42px 0/1px 100% no-repeat}
.c-midi svg{width:24px;height:13px}
.c-cur{padding:3px 5px;display:flex;justify-content:space-between;font-size:10px}
.c-cur i{border-left:1px solid #4c7a12;margin-right:28px}
.c-ico{border-right:3px double #4c7a12;background:linear-gradient(#4c7a12,#4c7a12) 59px 0/1px 100% no-repeat;padding:3px 0 0 65px}
.c-ico svg{width:36px;height:12px}
.c-nudge{display:flex;align-items:center;gap:7px;padding-left:5px}
.c-nudge svg:first-child{width:12px;height:12px}
.gridnudge{width:166px;padding-left:9px}
.gridnudge .stub{width:149px}
.gn{width:148px;height:46px;margin-left:1px;padding:1px 3px;background:linear-gradient(165deg,#22331a,#0e1a07 50%,#0a1405)}
.gn p{height:18px;display:flex;align-items:center;gap:4px;font-size:11px;line-height:16px}
.gn p:first-child{border-bottom:1px solid #4c7a12}
.gn em{font-style:normal;background:#a2e526;color:#14240a;width:36px;text-align:center;border-radius:2px;line-height:11px}
.gn b{width:36px;font-weight:normal}
.gn span{flex:1;text-align:right}
.transport{border:0;box-shadow:none;padding-left:11px;flex:1}
.transport hr{width:133px}
.toolrow.gap{gap:3px}
.minis{display:grid;gap:2px;padding:4px 0 1px 2px}
.minis i{width:12px;height:12px;border:1px solid #666;background:linear-gradient(#bbb 50%,#999 50%)}
.round{width:17px;height:17px;border-radius:50%;border:1px solid #333;background:linear-gradient(#8a8a8a,#5a5a5a);display:flex;align-items:center;justify-content:center}
.round svg{width:9px;height:7px;fill:#222}
.round.light{position:absolute;right:3px;top:7px;background:#b5b5b5;border-color:#444}

/* work area */
.work{display:flex;height:1210px;padding:0 4px 5px}
.side{width:101px;padding-top:4px;display:flex;flex-direction:column;gap:5px}
.panel{display:flex;flex-direction:column}
.panel h2{height:23px;flex:none;display:flex;align-items:center;justify-content:flex-end;gap:9px;padding:0 2px 2px 0;font-weight:bold;font-size:11.5px;color:#fff;background:linear-gradient(#5e5e5e,#444);border-radius:5px 5px 0 0}
.panel h2 .round{margin-top:1px}
.panel.regions h2{padding-bottom:0}
.tracks{height:1023px}
.groups{height:173px}
.list{flex:1;display:flex;background:#cbcbcb;min-height:0}
.list ul{flex:1;overflow:hidden;min-width:0}
.sb{width:15px;flex:none;background:linear-gradient(90deg,#a2a2a2,#b6b6b6);border-left:1px solid #bdbdbd;display:flex;flex-direction:column;justify-content:space-between}
.sb i{height:32px;background:linear-gradient(90deg,#a8a8a8,#8e8e8e)}
.list li{height:13px;display:flex;align-items:center;white-space:nowrap;font-size:10.3px}
.tracks .list ul{background:linear-gradient(90deg,transparent 27px,#bbb 27px 28px,transparent 28px 39px,#bbb 39px 40px,transparent 40px 54px,#bbb 54px 55px,transparent 55px)}
.tracks .list li{padding-left:11px;line-height:13px}
.dot{width:6px;height:6px;border-radius:50%;background:#444;flex:none}
.sw{width:4px;height:10px;border-radius:2px;margin-left:15px;flex:none}
.list li svg{width:9px;height:9px;margin:0 5px 0 7px;fill:#444}
.list li.sel{background:#929cb0}
.groups .list ul{background:linear-gradient(90deg,transparent 17px,#bbb 17px 18px,transparent 18px 29px,#bbb 29px 30px,transparent 30px 45px,#bbb 45px 46px,transparent 46px)}
.groups .list li{height:15px;padding-left:6px}
.groups li .sw{margin-left:10px}
.groups li>span:first-child{width:6px;height:6px;flex:none}
.ring{border:1.500px solid #555;border-radius:50%}
.groups .gid{width:16px;margin-left:6px;flex:none}
.az{width:14px;height:14px;background:#2c2c2c;color:#ccc;display:block;line-height:7px;font-size:8px}
.az b{display:block;padding-left:1px;height:7px}
.az b+b{text-align:right;padding-right:1px}
.az.y{color:#f4c224;outline:1px solid #f4c224}
.groups .sb i{height:32px;background:#a8a8a8;border-top:1px solid #ccc}

.center{width:2313px;margin-left:5px;padding-top:5px}
.universe{height:39px;background:#666;border:1px solid #222;border-radius:4px;position:relative;margin-bottom:5px;overflow:hidden}
.universe i{position:absolute}
.strip{left:0;right:0;top:0;height:6px;background:#949494;border-bottom:1px solid #222}
.flag{left:0;top:0;width:3px;height:5px;background:#f9c41c;border-radius:0 0 3px 0}
.teal{left:0;right:8px;top:7px;height:2px;background:#12343c}
.clips{left:0;top:9px;width:160px;height:3px;background:repeating-linear-gradient(90deg,#2a5a14 0 38px,#ccc 38px 40px);border:1px solid #ccd0c8;border-left:0}
.usb{right:0;top:7px;bottom:0;width:8px;background:#5a5a5a;border-left:1px solid #333;display:flex;flex-direction:column;justify-content:flex-end;gap:2px;padding-bottom:2px}
.usb svg{width:6px;height:4px;fill:#333}
.ruler{display:grid;grid-template-columns:136px 2163px 14px;height:17px;border-bottom:1px solid #1e1e1e}
.rl{display:flex;align-items:center;color:#fff;font-size:11px}
.bars{width:15px;height:10px;margin-left:2px}
.tri{width:7px;height:5px;margin-left:3px;fill:#111}
.tri.w{fill:#fff}
.r1 .rl{background:#737b87}
.r1 .rl b{margin-left:4px;font-size:10px}
.r1 .scale{background:linear-gradient(90deg,#444b4f 2116px,#737b87 2116px);display:flex;overflow:hidden;position:relative}
.r1 .scale svg.in{position:absolute;top:2px}
.tick{flex:none;border-left:1px solid #2b2f33;padding-left:3px;font-weight:bold;font-size:9.5px;color:#e6e6e6;line-height:16px}
.tick:first-child{padding-left:4px}
.rend{background:#3a3a3a}
.r2 .rl{background:#434343;color:#a9a9a9}
.r2 .rl b{margin-left:30px;font-size:10px}
.plus{margin-left:auto;font-weight:bold;font-size:12px;margin-right:5px}
.r2 .scale,.r2 .rend{background:#949494}
.r2 .scale{display:flex;align-items:center;font-size:9.7px}
.mark{width:5px;height:10px;margin-right:2px}
.r3{grid-template-columns:121px 2178px 14px}
.r3 .rl{background:#4d5257}
.r3 .scale{background:linear-gradient(#b0b0b3,#98989c);display:flex;overflow:hidden}
.r3 .tick{border-color:#7c7c80}
.clk{width:11px;height:11px;margin-left:68px}
.r3 .clk+.tri{margin-left:4px}

.track{display:flex;height:1089px;background:#3a3a3a}
.stripe{width:13px;margin-top:1px;background:#17365f;border-radius:0 0 0 5px;display:flex;flex-direction:column;justify-content:space-between;align-items:center;padding:1px 0 4px}
.round.navy{width:11px;height:11px;background:#4b668a;border-color:#1b2f4c}
.round.navy svg{width:6px;height:4px;fill:#1b2430}
.play{width:7px;height:8px}
.ctl{width:88px;margin:1px 0 1px 2px;background:#6b6b6b;border-radius:0 0 3px 3px;font-size:10px}
.name{display:flex;height:16px}
.name b{width:77px;border:1px solid #1b2fe0;background:#fff;color:#2570e8;font-size:11px;letter-spacing:.35px;line-height:14px;text-align:center}
.name span{flex:1;background:#fff;display:flex;align-items:center;padding-left:2px}
.name svg{width:7px;height:5px;fill:#555}
.sq{display:flex;gap:6px;padding:4px 3px 3px}
.sq i{width:16px;height:16px;border:1px solid #222;border-radius:3px;background:#474747;color:#eee;font:bold 11px/14px "Liberation Sans",sans-serif;text-align:center}
.sq .rec{background:radial-gradient(circle,#d7cdcd 0 4px,#4d2b2b 5px)}
.sq .blank{border-color:#757575;background:#757575}
.pick{height:15px;margin:1px 4px 3px 2px;border:1px solid #444;border-radius:2px;background:linear-gradient(#c2c2c2,#9c9c9c);display:flex;align-items:center;justify-content:center;position:relative}
.pick b{font-size:9.5px}
.pick svg{position:absolute;right:2px;top:3px;width:7px;height:4px;fill:#555}
.grn b{color:#2b7a16}
.two{display:flex;gap:2px;padding:0 4px 0 2px}
.two .pick{margin:0 0 3px;width:30px}
.two .grn{flex:1}
.two .tiny{width:12px;background:#b9b9b9}
.tiny i{width:7px;height:7px;border-radius:50%;background:#6f95f0;border:1px solid #2038a8}
.slot{flex:1;margin-left:2px;height:15px;background:#757575;border-radius:2px;padding:6px 0 0 1px}
.slot svg{width:8px;height:6px;fill:#555}
.meter{width:18px;padding:2px 7px 3px 3px}
.meter i{display:block;height:100%;border-left:1px solid #000;background:linear-gradient(#2a0505 0 5px,#4a2b04 5px 140px,#5a4a06 140px 541px,#294503 541px)}
.amp{background:linear-gradient(90deg,#8a8a8a,#adadad 70%,#8f8f8f)}
.lane{width:2163px;position:relative;background:#919192;border-left:2px solid #e0a23a;border-bottom:1px solid #777;display:flex;padding:1px 0 1px}
.region{flex:none;background:#303a29;position:relative;overflow:hidden;border-top:1px solid #000;border-bottom:1px solid #000}
.region>svg{position:absolute;left:0;top:0}
.region small{position:absolute;left:1px;top:2px;background:#424242;color:#fff;font:bold 9.5px/12px "Liberation Sans",sans-serif;letter-spacing:.18px;padding:0 2px;white-space:nowrap}
.region strong{position:absolute;top:29px;font:normal 47.8px/54px "Liberation Sans",Helvetica,sans-serif;color:#ffdcc2;white-space:nowrap}
.gap{flex:none;background:linear-gradient(90deg,#ccc 0 1px,#8b8b8d 2px,#959597 80%,#bdbdbd)}
.rest{flex:1;background:linear-gradient(90deg,#888 0 1px,#b5b5b5 1px 35px,#a4a4a4 35px 36px,#b5b5b5 36px)}
.vsb{width:14px;display:flex;flex-direction:column}
.cell{border:1px solid #777;background:linear-gradient(#c0c0c0,#999);display:flex;align-items:center;justify-content:center;font-size:11px;font-weight:bold;color:#222;height:20px;flex:none}
.cell svg{width:7px;height:5px;fill:#fff}
.cell svg.wide{width:10px;height:8px}
.cell svg.h{width:5px;height:7px}
.cell.s{height:17px}
.cell.s.last{height:13px}
.vtrack{background:#adadad;border-left:1px solid #8a8a8a}
.vtrack.a{height:37px}.vtrack.b{flex:1}
.vthumb{height:388px;flex:none;background:linear-gradient(90deg,#a0a0a0,#5c5c5c);border:1px solid #555}
.hsb{display:flex;height:16px;background:#454545}
.hl{width:135px;padding:2px}
.hl svg{width:30px;height:12px}
.hthumb{width:140px;background:linear-gradient(#979797,#666);border:1px solid #444}
.htrack{flex:1;background:#adadad}
.hsb .cell{height:16px;width:17px}
.hsb .cell.n{width:15px}
.hsb .cell.d{width:28px;border:0;background:#444;justify-content:flex-start;padding-left:2px}
.hsb .cell.d svg{width:12px;height:8px}

.regions{width:116px;margin:4px 0 0 6px}
.regions .list ul{background:linear-gradient(90deg,transparent 11px,#bbb 11px 12px,transparent 12px 27px,#bbb 27px 28px,transparent 28px 43px,#bbb 43px 44px,transparent 44px)}
.regions li{padding-left:24px}
.regions li svg{margin-right:22px}
.regions .list li{line-height:13px;font-size:10px}
.regions h2{gap:14px}
.rsb{height:15px;background:linear-gradient(#999,#666);width:101px}
.wgrip{position:absolute;right:0;bottom:1px;width:10px;height:10px;stroke:#aaa;fill:none}

/* send fader window */
.send{position:absolute;left:2451px;top:905px;width:89px;height:518px;background:#3b3b3b;box-shadow:0 3px 10px rgba(0,0,0,.6);font-weight:bold}
.sbar{height:16px;background:linear-gradient(#f4f4f4,#c4c4c4);display:flex;gap:7px;padding:2px 0 0 6px}
.sbar i{width:11px;height:11px;border:1px solid #888;border-radius:50%;background:radial-gradient(circle at 50% 75%,#fff,#bbb)}
.shead{height:101px;padding:6px 3px 0;background:linear-gradient(#4e4e4e,#5c5c5c 30%,#454545)}
.srow{display:flex;gap:2px;height:16px;margin-bottom:2px}
.sel2,.sb2{border:1px solid #2c2c2c;border-radius:2px;background:linear-gradient(#777,#555);color:#fff;font-size:9.5px;display:flex;align-items:center;justify-content:center;position:relative;flex:1;white-space:nowrap}
.srow:first-child .sel2{justify-content:flex-start;padding-left:2px;font-size:9px}
.sel2 svg{position:absolute;right:2px;top:4px;width:7px;height:4px;fill:#333}
.target{width:16px;background:#d11f2e;border:1px solid #600;border-radius:2px;padding:2px}
.target i{display:block;width:10px;height:10px;border:2px solid #ffc9c9;background:#ffc9c9;background-clip:content-box;padding:1px}
.sb2.w30{flex:none;width:30px;font-size:9px}
.sb2{font-size:9px}
.sb2 svg{width:15px;height:8px}
.srow:last-child .sb2:last-child{flex:none;width:24px}
.sbody{margin:4px 3px 0;height:381px;background:#6c6c6c;border:1px solid #555;border-radius:6px 6px 3px 3px;display:flex;flex-direction:column;align-items:center}
.knobs{width:83px;height:38px;margin-top:1px}
.slcd{width:67px;height:16px;margin-top:6px;border:2px solid #000;border-radius:3px;background:#14220c;color:#9bdc2a;font-size:10px;line-height:12px;text-align:center}
.pair{display:flex;justify-content:space-between;padding:0 4px}
.sm{display:block;width:25px;height:17px;margin:11px auto 0;border:1px solid #222;border-radius:3px;background:linear-gradient(#999,#666 50%,#777);color:#fff;font-size:11px;line-height:15px;text-align:center}
.fader{margin-top:15px}
.fader text{font:7.8px "Liberation Sans",sans-serif;fill:#e2e2e2;text-anchor:end}
.fader+.slcd{margin-top:14px}
.sub{width:75px;margin-top:9px;background:#848484;border-radius:4px;height:81px}
.sub h3{background:#464646;color:#fff;font-size:9.5px;font-weight:bold;text-align:center;line-height:13px;height:13px;border-radius:3px 3px 0 0}
.sub .sm{margin-top:6px}
.sub div{height:28px;display:flow-root}
.auto{display:flex;align-items:center;width:67px;height:16px;margin:5px 4px;border:1px solid #555;border-radius:2px;background:linear-gradient(#b5b5b5,#999);color:#2b7a16;font-size:9px;padding-left:8px;position:relative}
.auto svg{position:absolute;right:2px;top:3px;width:7px;height:4px;fill:#555}
.sfoot{height:13px;margin:1px 1px 0;background:#17365f;border-radius:0 0 4px 4px}

/* windows behind */
.browser{left:2549px;top:432px;width:11px;height:826px;background:linear-gradient(#cfcfcf 0 22px,#9a9a9a 22px 23px,#e8e8e8 23px 48px,#b5b5b5 48px 73px,#262626 73px 102px,#cfcfcf 102px 124px,#e8e8e8 124px 152px,#fff 152px 196px,#e3e3e3 196px 215px,#f1f1f1 215px 796px,#aaa 796px 797px,#d0d0d0 797px 825px,#777 825px)}
.browser-text div{font-size:13px;white-space:nowrap;display:flex;align-items:flex-end;line-height:14px;overflow:hidden}
.browser-text .link{text-decoration:underline}
.prefs{left:37px;top:1338px;width:707px;height:82px;background:linear-gradient(#8a8a8a,#bcbcbc 50%,#a2a2a2);box-shadow:0 6px 18px rgba(0,0,0,.5);display:flex;justify-content:flex-end;align-items:flex-start;gap:13px;padding:43px 21px 0 0}
.pill{width:114px;height:20px;border:1px solid #888;border-radius:10px;background:linear-gradient(#bdbdbd,#a8a8a8 50%,#b5b5b5);color:#555;padding:0;font:13px/17px "Open Sans",sans-serif}
.grip{position:absolute;right:1px;bottom:1px;width:12px;height:12px;stroke:#777}
.terminal{left:49px;top:1338px;width:921px;height:31px;background:#111;display:flex;justify-content:space-between;box-shadow:0 8px 16px rgba(0,0,0,.5)}
.term-text{font:11.600px/14px "DejaVu Sans Mono",monospace;color:#27a027;padding:0 0 0 5px;white-space:pre;margin-top:-1px}
.term-path{color:#7e7e1a}
.caret{display:inline-block;width:7px;height:13px;border:1px solid #2ee02e;vertical-align:-2px}
.term-bar{width:15px;background:#d0d0d0;display:flex;flex-direction:column;align-items:center;justify-content:space-between;padding:5px 0 1px}
.term-bar svg{width:7px;height:5px;fill:#333}
.term-bar .tgrip{width:12px;height:12px;stroke:#777}
.finder{left:1399px;top:1338px;width:1061px;height:45px;background:#dcdcdc;box-shadow:0 6px 18px rgba(0,0,0,.5);font:12px "Open Sans","Noto Sans",sans-serif}
.path-bar{height:22px;display:flex;align-items:center;gap:6px;padding:0 0 2px 205px;background:linear-gradient(#8f8f8f,#b9b9b9);border-bottom:1px solid #777;font-size:11.5px}
.crumb{display:flex;gap:4px;align-items:center}
.crumb svg{width:16px;height:12px}
.path-bar b{font-size:9px;color:#444;font-weight:normal}
.status{height:23px;line-height:21px;text-align:center;color:#555;width:1080px;font-size:11.7px}
```
FILE: script.js
```js
const $ = id => document.getElementById(id);
const PERIOD = 63.28;

// Track list: name, swatch colour, icon
const AUDIO = '#17365f', MIDI = '#35085f', INST = '#8a5410', AUX = '#3c5712', MSTR = '#5a0a12';
const tracks = [
  ['Flt_11', AUDIO, 'wave'], ['AF_09', AUDIO, 'wave'], ['Nartn', AUDIO, 'wave'], ['StrMc', AUDIO, 'wave'],
  ['PMIDI', MIDI, 'midi'], ['GtrMc', AUDIO, 'wave'], ['GtrDrc', AUDIO, 'wave'], ['Flute', AUDIO, 'wave'],
  ['Drums', MIDI, 'midi'], ['Piantq', INST, 'inst'], ['AdDr', INST, 'inst'], ['QS7In', INST, 'inst'],
  ['VFXIn', INST, 'inst'], ['BrdInp', AUDIO, 'wave'], ['Sbmst', AUX, 'aux'], ['Revrb', AUX, 'aux'],
  ['MstrA', MSTR, 'mstr'], ['MstrD', MSTR, 'mstr'], ['CtSW', MIDI, 'midi'], ['X2', MIDI, 'midi']
];
$('trackList').innerHTML = tracks.map(([n, c, i], k) =>
  `<li class="${k === 1 ? 'sel' : ''}"><i class="dot"></i><i class="sw" style="background:${c}"></i><svg viewBox="0 0 10 10"><use href="#i-${i}"/></svg>${n}</li>`).join('');

// Region list: name, bold, selected, icon
const regionRows = [
  ['AltoFlute', 1, 0], ['AltoFlute', 0, 0], ['AltoFlute', 0, 0], ['AltoFlute', 0, 0], ['AltoFlute', 1, 0],
  ['AltoFlute', 1, 0], ['AltoFlute', 1, 0], ['AltoFlute', 1, 1], ['AltoFlute', 1, 1], ['AltoFlute', 1, 1],
  ['AltoFlute', 1, 1], ['Flute_11', 1, 0], ['MT-32', 0, 0, 'midi'], ['QS Mix M', 0, 0, 'midi'], ['QS-7 Ins', 0, 0, 'midi']
];
$('regionList').innerHTML = regionRows.map(([n, b, s, i]) =>
  `<li class="${s ? 'sel' : ''}"><svg viewBox="0 0 10 10"><use href="#i-${i || 'wave'}"/></svg>${b ? `<b>${n}</b>` : n}</li>`).join('');

// CPU meters
$('cpus').innerHTML = [13, 7, 11, 7, 11, 7, 11, 7].map(v =>
  `<div class="cpu ${v < 10 ? 'lo' : ''}"><i></i><span>${v}%</span><b></b></div>`).join('');

// Rulers
const x = k => Math.round(k * PERIOD);
let ticks = '', grid = `<div class="tick" style="width:15px;border:0"></div>`;
for (let k = 0; k <= 34; k++) {
  const w = x(k + 1) - x(k), s = k * 5;
  ticks += `<div class="tick" style="width:${w}px">${Math.floor(s / 60)}:${String(s % 60).padStart(2, '0')}</div>`;
  grid += `<div class="tick" style="width:${w}px"></div>`;
}
$('scale').innerHTML = ticks +
  `<svg class="in" style="left:0" width="6" height="14"><path fill="#5a9be0" stroke="#000" d="M.5 0v8h5L1 13z"/></svg>` +
  `<svg class="in" style="left:2113px" width="8" height="15"><path fill="#5a9be0" stroke="#000" d="M4 .8 7.500 6H5.200v8H2.800V6H.5z"/></svg>`;
$('gridScale').innerHTML = grid;

// Envelopes: upper and lower outlines of each take, as x,y pairs
const w1 = {
  top: '22,788 28,786 34,780 40,783 43,782 48,730 51,728 54,640 60,552 65,622 70,600 74,480 78,390 82,415 86,262 90,300 95,322 97,287 100,300 103,289 107,370 113,428 117,395 121,377 125,385 129,447 131,515 134,520 138,610 140,615 145,766 150,765 155,770 158,782 161,784 164,640 167,560 170,555 173,588 177,580 181,562 184,483 188,560 191,572 196,568 201,509 205,560 208,612 211,590 214,605 216,695 220,537 224,545 228,450 234,326 238,325 242,335 245,360 248,340 252,360 256,375 260,430 265,450 268,425 271,490 274,600 277,782 281,782 284,650 287,475 290,520 296,650 300,687 306,580 310,620 313,660 317,778 322,784 330,787 340,781 347,784 350,640 352,534 356,560 360,658 364,640 368,508 372,530 377,522 380,533 384,518 388,545 390,530 395,565 399,545 403,560 408,572 413,570 417,605 420,612 423,592 427,605 431,615 438,625 441,720 444,782 450,780 454,768 458,776 462,772 464,690 468,590 471,583 475,605 480,500 484,450 490,440 495,430 496,414 500,448 503,395 507,412 509,395 513,392 516,430 519,418 522,475 529,477 533,570 537,575 541,620 545,632 548,768 552,772 557,785 559,620 561,526 566,570 572,640 576,686 580,614 586,650 590,688 595,620 599,540 604,535 608,521 612,565 616,575 620,590 626,598 630,595 634,600 637,583 642,643 646,648 650,670 655,680 658,758 663,770 668,784 671,650 673,534 676,545 678,493 681,545 684,530 687,545 690,516 694,565 697,590 700,540 702,492 705,510 708,712 711,460 714,560 718,664 722,555 725,730 728,362 731,370 733,580 737,638 741,520 744,420 747,398 750,560 754,606 757,580 760,520 763,517 766,588 770,523 774,570 777,527 781,530 786,605 790,565 793,605 795,560 799,605 803,640 806,670 812,665 818,700 821,772 826,770 828,748 832,752 835,774 838,720 841,680 845,670 849,560 852,495 862,495 866,450 869,445 873,405 877,410 880,400 884,420 887,392 891,376 895,400 898,405 901,425 905,430 909,443 914,528 917,480 921,525 925,550 929,520 933,480 936,560 937,748 943,752 946,768 950,770 954,782 958,650 963,540 968,450 972,387 975,385 978,325 981,318 986,292 991,293 997,303 1000,340 1006,368 1009,342 1013,360 1018,358 1023,375 1027,380 1029,405 1031,378 1036,430 1039,400 1042,430 1044,405 1047,460 1052,468 1055,472 1058,640 1062,540 1065,535 1069,480 1074,460 1078,475 1081,455 1085,485 1088,465 1092,487 1096,460 1100,443 1103,470 1106,535 1110,538 1114,680 1117,787 1122,785 1129,764 1133,775 1138,786 1141,600 1143,458 1146,455 1148,480 1151,768 1154,620 1157,403 1160,405 1163,435 1166,408 1169,415 1172,405 1177,385 1181,402 1187,415 1190,400 1194,432 1198,490 1201,410 1204,480 1208,540 1211,450 1215,556 1219,425 1223,485 1227,500 1230,700 1233,763 1241,766 1244,620 1248,414 1251,500 1256,440 1260,425 1264,410 1267,410 1271,400 1275,445 1279,395 1283,440 1287,438 1292,460 1296,460 1300,445 1305,452 1310,448 1313,470 1317,475 1322,492 1327,498 1331,510 1336,600 1341,768 1345,770 1350,784 1354,630 1358,620 1362,630 1366,550 1371,445 1375,570 1380,620 1384,580 1389,530 1394,522 1398,490 1402,456 1406,500 1410,552 1414,535 1418,482 1424,485 1428,470 1431,645 1434,650 1437,760 1443,765 1450,772 1453,776 1456,125 1460,640 1466,788 1471,760 1476,405 1480,560 1484,765 1489,782 1492,760 1496,416 1500,640 1503,784 1509,773 1517,785',
  bot: '22,790 35,795 42,793 48,830 52,950 57,1060 61,1062 64,1040 69,1050 73,1150 78,1300 82,1312 86,1468 90,1430 94,1343 98,1438 101,1290 104,1330 107,1250 112,1250 115,1217 119,1225 124,1210 127,1155 130,1188 133,1110 137,1080 141,960 145,805 150,807 157,800 160,790 162,850 165,1060 169,1083 173,1075 177,1095 181,1108 185,1173 189,1130 192,1052 195,1055 198,1105 201,1148 205,1080 208,1013 212,1035 216,890 220,1115 225,1130 229,1200 233,1310 236,1312 240,1357 243,1320 246,1298 249,1413 252,1380 255,1385 259,1340 262,1270 265,1110 268,1190 272,1080 276,798 280,795 284,950 287,1142 291,1060 296,920 299,887 303,980 307,1075 311,1010 314,950 317,800 322,790 330,788 340,795 346,792 350,870 352,1152 356,1060 361,932 366,1150 370,1155 374,1113 377,1135 380,1130 384,1163 388,1110 393,1020 396,983 400,1017 403,970 406,985 409,980 414,960 419,947 424,962 428,955 432,953 436,935 440,918 444,790 450,808 455,806 461,797 465,890 468,1068 472,1072 474,1045 478,1090 484,1128 487,1130 490,1145 493,1130 497,1172 500,1150 503,1185 506,1145 509,1250 513,1220 516,1252 520,1175 523,1140 527,1235 530,1225 533,1075 537,1073 541,975 545,965 548,795 556,791 559,1000 562,1065 567,1000 573,903 576,930 580,1038 585,985 590,925 594,1010 598,1120 601,1183 605,1150 609,1130 613,1105 619,1080 623,1000 627,1010 631,1003 637,998 641,900 646,903 650,895 655,888 658,820 663,800 668,794 671,960 673,1075 675,1005 678,1100 682,1060 684,1100 687,1080 690,1118 694,1050 698,1055 702,1143 705,1020 708,890 711,1175 714,1090 718,938 722,1080 725,835 728,1210 731,1208 734,1090 737,998 740,1095 744,1145 747,1195 750,1110 754,1040 757,1110 760,1060 763,1115 767,985 770,1138 773,965 777,1135 781,1060 783,1088 786,938 789,1030 793,940 796,1030 799,970 803,945 807,888 814,885 818,878 821,805 826,803 829,820 833,822 837,800 841,880 846,1045 850,1050 853,1148 857,1155 861,1128 865,1140 867,1205 870,1210 873,1262 877,1220 882,1225 885,1285 888,1260 890,1360 893,1325 897,1360 901,1330 904,1330 908,1340 911,1330 914,1212 917,1285 920,1205 924,1262 927,1218 929,1262 932,1158 935,1160 938,830 943,835 947,808 952,803 955,810 959,920 964,1060 970,1200 972,1226 979,1226 982,1240 988,1243 992,1238 998,1238 1001,1190 1004,1195 1008,1150 1013,1138 1018,1110 1022,1105 1025,1118 1029,1073 1033,1125 1037,1080 1042,1125 1046,1075 1051,1080 1056,1085 1058,962 1063,1050 1068,1180 1073,1262 1078,1255 1081,1218 1084,1273 1088,1240 1091,1217 1095,1225 1097,1215 1100,1258 1103,1198 1107,1150 1111,1040 1115,800 1120,790 1124,805 1129,815 1134,803 1138,792 1141,1000 1143,1175 1147,1090 1151,813 1154,950 1157,1063 1161,1020 1165,1055 1169,1050 1172,1100 1177,1150 1181,1095 1185,1098 1189,1110 1192,1095 1195,1112 1198,1085 1201,1125 1204,1030 1206,1135 1210,1028 1213,1132 1216,1060 1219,1162 1223,1090 1227,1075 1230,850 1232,808 1236,812 1241,820 1245,1000 1248,1178 1251,1182 1254,1125 1258,1170 1263,1195 1267,1280 1273,1300 1277,1235 1279,1302 1284,1298 1287,1190 1290,1255 1294,1165 1297,1228 1301,1165 1304,1228 1308,1175 1310,1220 1313,1155 1317,1190 1321,1185 1325,1100 1329,1023 1332,1055 1336,950 1341,800 1347,795 1351,800 1354,890 1360,892 1366,920 1370,988 1374,900 1377,898 1380,912 1384,905 1388,928 1392,935 1396,968 1400,965 1404,992 1407,1003 1410,990 1415,1037 1420,985 1424,975 1428,985 1431,890 1434,905 1436,822 1441,815 1447,797 1452,795 1457,1243 1460,1110 1465,795 1470,792 1474,900 1477,1145 1481,1000 1485,800 1489,795 1492,900 1496,1077 1500,950 1503,800 1509,795 1517,790'
};
const w2 = {
  top: '29,784 36,778 41,775 46,779 50,750 54,680 58,590 62,520 65,506 68,560 71,578 75,560 78,480 82,430 86,371 88,390 92,232 95,242 98,213 101,222 104,202 107,228 110,230 113,280 116,290 120,333 123,278 127,296 130,286 134,320 138,440 142,500 147,640 150,768 156,752 161,770 165,778 168,640 170,505 173,497 177,520 181,495 184,498 187,525 191,428 194,470 197,512 201,465 204,462 208,440 212,545 216,550 220,657 225,480 229,440 233,340 236,330 240,268 243,265 246,238 249,256 252,234 256,235 260,250 264,280 268,330 272,490 275,500 280,640 282,775 286,780 289,560 291,392 294,420 299,600 303,690 306,696 309,490 313,500 317,600 321,770 326,776 335,780 343,776 351,780 355,600 359,440 362,530 365,540 367,645 371,480 374,458 378,495 381,458 385,455 388,420 392,430 396,490 400,492 403,560 406,486 408,560 411,510 415,595 418,528 425,600 428,545 432,580 434,570 438,585 444,588 447,660 450,782 455,775 459,762 465,770 470,620 474,530 477,530 480,548 484,460 489,395 492,422 496,400 499,403 501,380 505,410 509,365 513,448 516,340 519,425 522,372 526,410 530,445 533,388 537,420 540,510 543,515 546,600 551,650 554,765 560,772 564,512 568,508 572,600 576,640 580,690 586,550 590,580 596,640 600,520 605,418 609,440 612,460 617,480 621,482 625,490 629,530 633,538 638,543 641,520 645,560 649,620 653,625 658,650 661,660 664,750 668,765 672,780 676,560 678,465 681,605 684,436 687,628 690,462 693,590 696,456 699,575 702,515 705,590 708,452 711,530 716,395 719,500 724,575 727,495 731,726 733,303 737,400 741,580 744,480 748,500 751,345 755,400 759,515 763,510 766,466 770,572 774,460 777,445 779,495 783,430 787,500 789,468 794,570 797,515 801,570 805,570 809,620 813,640 817,638 822,652 826,770 832,733 838,733 841,770 845,660 850,560 855,490 859,466 863,422 867,430 870,380 873,358 876,375 879,322 882,345 884,380 888,340 891,370 895,300 898,365 902,296 905,310 908,357 912,325 915,330 918,390 923,395 926,410 930,412 932,455 935,430 938,480 942,600 944,725 949,740 954,765 960,778 964,560 968,480 972,430 975,335 978,318 981,400 984,550 989,540 995,508 999,540 1003,520 1006,513 1009,540 1013,520 1017,545 1022,520 1028,548 1032,515 1036,555 1040,550 1044,575 1048,562 1052,620 1056,605 1060,615 1065,628 1069,600 1073,515 1078,455 1082,452 1085,480 1090,428 1094,455 1098,450 1100,423 1105,425 1108,480 1112,510 1116,640 1122,780 1128,778 1134,750 1139,765 1143,778 1147,560 1149,528 1153,600 1158,772 1162,540 1166,560 1174,563 1180,563 1184,550 1188,572 1193,570 1198,582 1204,575 1209,600 1213,565 1217,580 1220,560 1223,542 1226,630 1230,605 1233,610 1237,750 1243,755 1246,758 1250,560 1253,416 1257,450 1260,480 1262,460 1265,485 1269,450 1273,425 1277,470 1281,400 1284,340 1288,400 1291,368 1296,400 1300,430 1304,405 1308,420 1310,404 1314,470 1317,525 1320,440 1324,462 1327,470 1330,580 1336,592 1340,640 1345,740 1352,775 1356,775 1360,640 1364,633 1368,655 1372,580 1378,512 1382,600 1386,628 1390,590 1395,555 1399,550 1402,498 1407,446 1411,510 1416,545 1421,535 1427,545 1430,530 1434,600 1437,670 1442,700 1445,733 1448,733 1453,770 1457,770 1462,298 1466,640 1470,778 1475,780 1478,720 1482,475 1486,640 1489,762 1494,765 1498,580 1502,547 1506,640 1511,770 1517,775 1523,780',
  bot: '29,795 45,792 48,800 52,870 56,960 60,1112 63,1117 66,1080 70,1065 73,1070 77,1170 80,1195 83,1220 88,1158 91,1436 95,1240 100,1455 104,1457 106,1385 110,1370 114,1265 118,1320 121,1238 124,1290 127,1200 130,1250 133,1205 136,1240 139,1120 143,1050 148,900 151,805 156,826 161,800 166,797 168,950 170,1090 173,1118 177,1085 181,1098 186,1130 191,1217 195,1065 199,1080 202,1090 204,1065 208,1183 211,1060 217,1072 220,900 224,1050 228,1110 232,1180 234,1250 238,1275 241,1298 243,1265 246,1358 249,1300 252,1380 255,1468 258,1410 261,1430 264,1375 268,1280 272,1192 275,1195 280,960 283,797 286,800 289,960 291,1187 295,1120 300,940 306,882 311,1110 316,1040 319,900 323,803 332,792 346,799 351,795 355,900 359,1175 362,1080 364,1092 368,947 371,1095 374,1113 379,1080 383,1110 388,1160 392,1110 396,1005 400,1055 403,962 406,1058 410,965 413,1025 418,957 420,1000 424,945 429,1005 432,960 435,1010 439,993 443,990 447,880 451,797 458,812 463,808 466,795 470,880 475,1015 479,1020 484,1080 489,1120 493,1128 496,1145 498,1100 501,1172 505,1145 509,1218 513,1175 516,1297 519,1118 522,1263 526,1165 529,1185 530,1125 533,1267 536,1155 541,1080 546,960 551,950 554,805 561,802 565,1080 569,1082 573,980 578,895 583,1018 587,1018 591,960 597,955 600,1070 603,1155 607,1060 611,1105 615,1090 619,1008 623,1083 627,1040 630,988 634,1050 637,1005 641,1028 646,955 653,950 659,930 662,865 665,808 667,825 670,808 673,800 676,960 678,1125 681,932 684,1123 687,922 690,1115 694,960 696,1143 699,955 702,1058 705,980 708,1135 711,1060 716,1183 720,1110 724,1010 727,1092 731,840 734,1300 737,1130 741,1010 745,1105 748,1080 751,1270 755,1060 759,1058 763,1075 766,1110 770,968 775,1060 779,1060 783,1125 786,1020 789,1035 792,972 795,1013 798,975 801,1008 804,955 807,978 812,925 818,920 823,910 827,800 833,830 838,828 841,800 846,960 850,1040 852,1160 856,1092 859,1100 863,1140 867,1155 872,1195 876,1190 879,1247 884,1180 888,1225 892,1240 896,1313 899,1240 902,1333 907,1255 910,1255 914,1340 917,1215 921,1245 926,1240 930,1250 934,1262 937,1170 941,1080 942,835 945,860 948,825 954,815 958,800 961,830 966,1000 970,1130 975,1200 978,1265 982,1190 986,1190 990,1222 994,1205 997,1190 1001,1232 1005,1190 1009,1165 1014,1160 1018,1150 1022,1148 1027,1115 1031,1140 1034,1130 1036,1172 1040,1135 1043,1130 1048,1080 1053,1030 1058,1060 1062,1055 1065,997 1070,1080 1076,1205 1082,1210 1087,1200 1091,1242 1095,1190 1100,1190 1105,1208 1109,1140 1113,1060 1118,940 1122,808 1129,805 1134,823 1138,822 1142,800 1146,960 1149,1138 1153,1060 1158,805 1161,900 1163,1068 1168,1040 1174,1050 1178,1060 1181,1128 1186,1060 1190,1085 1195,1100 1199,1120 1202,1100 1207,1118 1211,1105 1215,1125 1219,1130 1223,1175 1226,1075 1230,1095 1233,1080 1236,822 1240,828 1246,815 1250,980 1253,1173 1257,1145 1261,1158 1265,1135 1269,1165 1274,1245 1277,1218 1280,1293 1285,1250 1291,1270 1294,1190 1297,1230 1300,1138 1303,1225 1306,1120 1309,1222 1312,1135 1314,1215 1317,1118 1321,1200 1323,1125 1326,1183 1330,1070 1334,1060 1338,1055 1342,940 1347,820 1352,803 1357,803 1361,882 1365,865 1369,860 1373,940 1376,977 1381,945 1385,908 1390,915 1393,960 1397,985 1401,968 1405,1007 1410,955 1413,985 1415,960 1419,1008 1423,965 1426,988 1430,970 1434,968 1437,860 1441,862 1445,845 1450,820 1454,808 1457,815 1462,1108 1467,860 1470,800 1475,793 1479,880 1482,993 1486,880 1490,795 1494,800 1499,1085 1503,1082 1507,900 1511,803 1516,800 1523,795'
};
const w3 = {
  top: '26,787 34,786 40,782 46,786 50,760 54,740 57,600 60,560 63,517 66,550 69,570 73,520 77,330 82,238 85,236 88,108 101,108 104,200 106,133 109,268 112,212 115,270 118,245 122,290 125,292 129,390 133,388 137,545 141,600 145,640 148,775 155,772 161,785 165,760 168,528 173,528 176,538 180,500 183,495 188,402 192,540 195,580 200,540 205,423 209,560 211,612 214,552 218,560 220,726 224,475 229,455 233,360 237,263 242,260 246,250 249,293 252,200 256,243 260,248 265,290 268,455 272,322 276,560 280,782 284,784 288,410 292,405 296,560 300,680 304,700 309,567 313,600 317,680 321,780 327,783 333,787 344,782 352,786 354,483 359,486 363,640 367,682 371,550 374,543 378,555 382,540 388,465 391,545 394,548 397,609 401,580 404,592 406,577 410,595 416,605 420,648 424,645 427,655 430,636 432,700 435,672 439,690 443,695 448,786 453,782 457,770 463,778 466,776 470,640 473,582 478,575 484,500 490,465 497,450 501,428 504,487 507,402 511,410 516,349 521,368 526,445 530,390 534,430 537,478 539,475 544,520 549,680 553,778 559,780 562,600 565,477 569,520 574,600 580,740 583,600 588,630 593,678 597,610 603,470 606,525 609,520 612,450 615,545 620,580 623,543 627,632 632,615 637,632 641,610 645,685 650,690 655,710 659,722 664,770 671,786 674,545 678,548 681,525 684,545 688,535 690,550 693,480 696,478 699,662 705,490 708,490 711,752 713,433 717,545 722,640 725,550 728,736 730,460 734,352 737,612 742,595 745,555 748,580 751,380 755,560 759,598 763,555 766,560 771,650 774,520 780,520 785,545 790,560 795,580 800,575 805,630 808,705 815,712 822,730 825,775 830,768 833,757 838,770 842,735 846,695 850,555 853,550 857,460 862,420 866,425 872,408 875,370 878,347 882,390 884,413 888,368 890,370 893,296 897,325 901,295 904,345 908,325 910,345 913,322 916,495 920,385 923,410 925,375 928,408 931,372 934,412 937,388 940,600 943,770 948,765 953,778 957,775 961,640 965,500 969,490 973,330 977,270 982,235 985,230 989,198 996,198 999,210 1001,195 1005,268 1008,252 1010,295 1012,260 1016,296 1020,280 1023,310 1027,310 1030,440 1034,310 1038,350 1042,370 1046,337 1050,350 1053,405 1056,395 1058,400 1062,660 1065,470 1069,430 1072,370 1076,351 1082,355 1086,352 1090,357 1095,358 1100,365 1104,400 1110,450 1114,530 1119,780 1125,786 1130,775 1133,772 1137,780 1142,787 1145,342 1149,345 1154,640 1156,750 1160,420 1162,395 1165,448 1169,410 1172,385 1174,398 1178,315 1181,312 1184,370 1187,350 1190,405 1192,335 1195,408 1198,340 1201,445 1204,340 1207,435 1210,342 1214,398 1218,355 1221,330 1226,365 1229,420 1232,600 1236,765 1240,765 1245,778 1249,470 1252,388 1256,525 1259,350 1264,370 1268,330 1271,325 1274,272 1280,280 1285,257 1289,285 1292,280 1297,320 1302,328 1307,335 1311,350 1316,345 1321,350 1326,400 1330,430 1335,432 1340,560 1344,768 1351,787 1354,780 1357,660 1361,617 1366,615 1370,510 1374,440 1378,590 1383,642 1387,605 1390,620 1394,560 1397,568 1402,520 1406,500 1410,598 1414,545 1418,500 1422,465 1426,495 1430,483 1434,600 1441,775 1447,778 1455,776 1459,108 1461,110 1464,640 1470,786 1474,785 1480,450 1483,640 1488,780 1494,787 1497,600 1499,389 1503,640 1507,780 1512,780 1519,787',
  bot: '26,789 40,795 46,788 51,830 55,920 60,990 64,1053 69,935 73,965 77,1150 82,1345 85,1345 88,1468 101,1468 103,1414 106,1410 109,1310 111,1348 114,1275 117,1280 121,1257 124,1315 129,1298 133,1230 137,1080 142,960 147,800 152,803 158,797 163,790 166,960 169,1065 173,1067 177,1053 181,1078 184,1065 189,1162 194,1048 197,1055 200,1115 205,1130 208,1110 211,963 215,1005 217,1000 220,833 223,1090 226,1118 229,1110 233,1200 237,1280 240,1285 242,1273 246,1296 250,1280 254,1296 258,1230 261,1250 264,1180 267,1165 272,1040 276,960 280,795 285,795 288,1173 292,1172 295,1060 300,890 304,865 307,960 310,1048 314,980 318,880 321,800 330,790 344,795 352,790 355,1095 359,1093 364,915 368,935 371,1120 374,1137 378,1105 383,1135 385,1130 388,1183 392,1100 394,1098 397,1040 404,1038 408,1010 413,960 417,962 420,922 425,940 428,938 431,890 434,935 439,915 443,905 448,790 456,800 461,800 465,793 469,900 472,1055 476,1063 478,1040 482,1110 487,1167 495,1172 500,1187 504,1170 507,1178 511,1170 516,1155 520,1115 523,1115 526,1083 530,1060 533,1060 536,995 539,1040 545,965 549,910 552,800 559,795 562,960 565,1053 570,1000 575,930 580,848 583,1005 588,985 593,900 598,1010 602,1150 605,1202 609,1130 612,1150 616,1125 619,1093 623,1100 627,985 630,1033 634,1005 640,1020 644,908 649,900 655,885 659,880 663,812 671,794 675,1095 681,1138 685,1105 689,1098 693,1100 695,1110 699,933 703,1100 708,1127 711,825 713,1178 718,1060 722,935 725,1058 728,885 731,1090 734,1268 738,985 742,990 745,1075 748,1065 751,1220 754,1060 757,970 762,1070 766,1112 771,988 774,1162 778,1158 782,1162 786,1090 789,1045 794,990 797,1045 801,970 805,925 809,888 815,893 819,882 822,878 825,800 831,810 838,813 843,850 848,905 852,960 857,1120 859,1122 863,1092 867,1130 871,1180 875,1215 880,1210 884,1178 887,1225 890,1200 894,1243 898,1200 902,1215 907,1160 910,1155 913,1160 916,1070 920,1133 923,1105 928,1103 931,1105 934,1090 938,1000 942,805 945,822 948,808 952,798 957,797 962,960 966,1090 970,1130 974,1262 978,1262 981,1075 984,1095 987,1098 991,1120 995,1105 999,1145 1003,1095 1008,1110 1012,1078 1016,1078 1021,1060 1025,1045 1029,1055 1033,1010 1037,1043 1041,1003 1045,1035 1048,1052 1053,1000 1056,1020 1058,1022 1062,883 1065,955 1070,1080 1075,1150 1079,1185 1083,1155 1088,1165 1091,1130 1095,1145 1099,1130 1103,1158 1107,1108 1112,1095 1115,960 1119,797 1126,793 1132,805 1137,795 1142,790 1146,1095 1149,1090 1154,860 1157,815 1160,960 1163,1000 1167,987 1172,995 1177,1040 1180,1042 1184,1000 1188,1003 1190,978 1194,1030 1198,988 1202,1030 1206,1020 1210,1033 1214,985 1218,990 1223,1035 1226,975 1231,960 1236,810 1241,808 1245,800 1249,1080 1252,1143 1256,990 1259,1120 1264,1135 1268,1165 1274,1200 1279,1180 1284,1242 1289,1190 1295,1175 1300,1155 1303,1110 1309,1118 1314,1085 1320,1095 1325,1060 1329,960 1334,975 1340,965 1345,805 1351,792 1355,800 1360,925 1366,930 1370,980 1375,1073 1380,923 1384,935 1388,962 1395,960 1400,967 1406,1013 1409,990 1411,1015 1414,988 1418,1005 1422,985 1425,1007 1428,988 1430,1035 1434,965 1438,905 1442,800 1450,795 1455,800 1459,1443 1462,1442 1465,960 1469,795 1475,793 1480,1240 1484,1240 1487,960 1491,797 1496,830 1499,1088 1503,1020 1507,800 1512,792 1519,789'
};

// name, title, title x, left edge, width, envelope, envelope origin, vertical gain
const regions = [
  ['AltoFlute-NORM_09-02', 'Raw Flute', 281, 248, 514, w1, 240, 1],
  ['AltoFlute-NORM_10-02', 'Notch Filter', 831, 790, 514, w2, 780, 1],
  ['AltoFlute-NORM_11-02', 'Peak Filter', 1371, 1319, 514, w3, 1310, 1],
  ['AltoFlute-NORM_12-02', 'Low Pass Filter', 1874, 1847, 515, w1, 1839, .987]
];
const MID = 542.700, SX = 1 / 2.9037, SY = 1 / 1.42545;
let pos = 248, html = '';
for (const [name, title, tx, left, width, env, org, gain] of regions) {
  if (left > pos) html += `<div class="gap" style="width:${left - pos}px"></div>`;
  pos = left + width;
  const map = s => s.split(' ').map(p => {
    const [px, py] = p.split(',').map(Number);
    return (org + px * SX - left).toFixed(1) + ',' + (MID + (py - 788) * SY * gain).toFixed(1);
  });
  const pts = map(env.top).concat(map(env.bot).reverse()).join(' ');
  let lines = '';
  for (let k = 1; k < 34; k++) {
    const gx = 246 + x(k) - left;
    if (gx > 0 && gx < width) lines += `M${gx + .5} 0v1086`;
  }
  html += `<div class="region" style="width:${width}px"><svg width="${width}" height="1086"><path stroke="#4a5a3e" d="${lines}"/><polygon points="${pts}" fill="#80a46b" stroke="#abc59c" stroke-width="1" stroke-linejoin="bevel"/></svg><small>${name}</small><strong style="left:${tx - left}px">${title}</strong></div>`;
}
$('lane').innerHTML = html + '<div class="rest"></div>';

// Send fader, scales and meter
const Y0 = 1131, X0 = 2454;
const line = (x1, x2, y) => `<path stroke="#3c3c3c" d="M${x1 - X0} ${y - Y0 + .5}H${x2 - X0}"/>`;
let f = '';
for (const [t, y] of [['12', 1138], ['6', 1155], ['0', 1172], ['-5', 1188], ['-10', 1204], ['-15', 1221], ['-20', 1234], ['-30', 1246], ['-40', 1254], ['-60', 1262], ['-90', 1268], ['∞', 1275]])
  f += line(2462, 2469, y) + line(2478, 2482, y) + `<text x="${2492 - X0}" y="${y - Y0 + 3}">${t}</text>`;
for (const [t, y] of [['0', 1140], ['-3', 1157], ['-6', 1175], ['-10', 1198], ['-16', 1221], ['-22', 1238], ['-32', 1256], ['-60', 1268]])
  f += line(2502, 2505, y) + line(2520, 2523, y) + `<text x="${2530 - X0}" y="${y - Y0 + 3}">${t}</text>`;
f += `<rect x="16.500" y="3.500" width="7" height="144" rx="1.500" fill="#8c8c8c" stroke="#444"/><path fill="#222" d="M18.500 6h3v140h-3z"/>
<linearGradient id="cap" x2="0" y2="1"><stop offset="0" stop-color="#555"/><stop offset=".15" stop-color="#bbb"/><stop offset=".3" stop-color="#888"/><stop offset=".5" stop-color="#ddd"/><stop offset=".52" stop-color="#000"/><stop offset=".56" stop-color="#fff"/><stop offset=".85" stop-color="#aaa"/><stop offset=".9" stop-color="#333"/></linearGradient>
<rect x="11" y="33" width="17" height="36" fill="url(#cap)" stroke="#222"/>
<path fill="#2a0505" d="M52 4h13v5H52z"/><path fill="#4a2b04" d="M52 9h13v18H52z"/><path fill="#5a4a06" d="M52 27h13v52H52z"/><path fill="#294503" d="M52 79h13v70H52z"/><path fill="#000" d="M58 9h1v140h-1z"/>`;
$('fader').innerHTML = f;

// Text visible at the edge of the browser window: text, baseline y, colour, weight, link
let prev = 432;
$('browserText').innerHTML = [
  ['se', 475, '#111', 700], ['ev', 498, '#222', 700], ['m', 526, '#999', 700], ['re', 632, '#888', 400], ['ck', 708, '#1a3a9a', 700, 1],
  ['g-', 726, '#1a8a3a', 700], ['a', 758, '#222', 400], ['t(t', 773, '#222', 400], ['en', 814, '#1a3a9a', 700, 1], ['y r', 847, '#222', 400],
  ['dir', 862, '#222', 400], ['13', 920, '#1a8a3a', 400], ['3 a', 937, '#222', 400], ['at', 953, '#111', 700], ['20', 975, '#777', 400],
  ['__', 1043, '#1a3a9a', 400], ['St', 1065, '#1a8a3a', 400], ['sta', 1081, '#222', 400], ['p', 1097, '#222', 400], ['it', 1187, '#111', 400]
].map(([t, y, c, w, u]) => {
  const h = y - prev; prev = y;
  return `<div class="${u ? 'link' : ''}" style="height:${h}px;color:${c};font-weight:${w}">${t}</div>`;
}).join('');
```
